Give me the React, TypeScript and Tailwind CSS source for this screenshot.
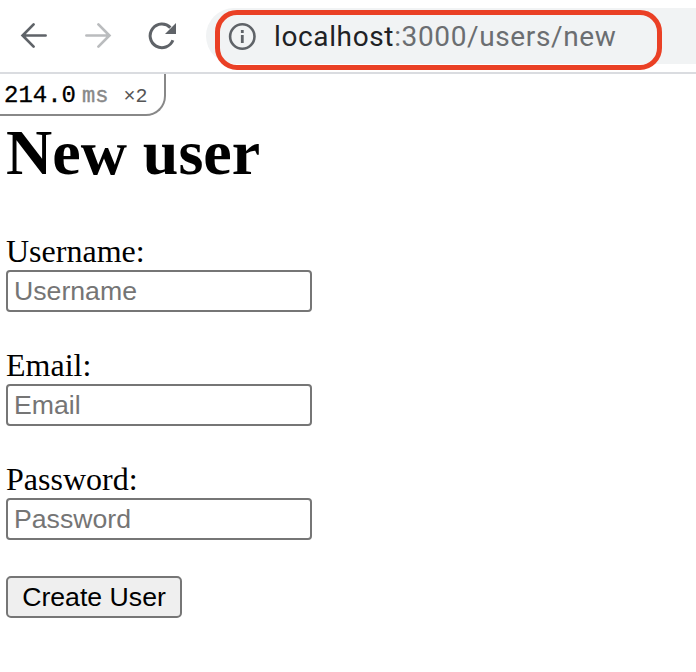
import React from "react";

function NavIcons() {
  return (
    <div className="flex h-full w-[206px] shrink-0">
      <svg width="206" height="72" viewBox="0 0 206 72" fill="none" strokeLinecap="round" strokeLinejoin="miter" strokeWidth="2.7">
        <path d="M33.6 24.4 22.6 35.5 33.6 46.6M23 35.5H45.6" stroke="#5f6368" />
        <path d="M98.4 24.4 109.4 35.5 98.4 46.6M86.4 35.5H109" stroke="#babcbe" />
        <path d="M172.9 40.3A11.8 11.8 0 1 1 170.4 27.6" stroke="#5f6368" strokeWidth="3" strokeLinecap="butt" />
        <path d="M176 23V34H165Z" fill="#5f6368" />
      </svg>
    </div>
  );
}

function BrowserBar() {
  return (
    <header className="flex h-[74px] border-b-2 border-[#dadce0] bg-white">
      <NavIcons />
      <div className="relative mt-2 flex h-14 flex-1 items-center rounded-l-full bg-[#f1f3f4] pl-[22px]">
        <svg width="29" height="29" viewBox="0 0 29 29" fill="none" className="shrink-0">
          <circle cx="14.3" cy="14.5" r="12.2" stroke="#5f6368" strokeWidth="2.6" />
          <path d="M14.3 13V21M14.3 8V11" stroke="#5f6368" strokeWidth="2.8" />
        </svg>
        <div className="ml-[17px] whitespace-nowrap pt-[2px] font-['Roboto',sans-serif] text-[28px] leading-[34px] tracking-[0.63px] text-[#6b6e71]">
          <span className="text-[#202124]">localhost</span>:3000/users/new
        </div>
        <div className="absolute left-[9px] top-[2px] h-[60px] w-[447px] rounded-[22px] border-[5px] border-[#ea4025]" />
      </div>
    </header>
  );
}

function Field({ label, type = "text" }: { label: string; type?: string }) {
  return (
    <div className="mb-9 flex flex-col">
      <label className="h-9 text-[32px] leading-[34px]">{label}:</label>
      <input
        type={type}
        placeholder={label}
        className="h-[42px] w-[306px] rounded-[4px] border-2 border-[#767676] bg-white px-[6px] font-['Liberation_Sans',Arial,sans-serif] text-[26.67px] leading-[30px] placeholder:text-[#757575]"
      />
    </div>
  );
}

export default function App() {
  return (
    <div className="h-[672px] w-[696px] overflow-hidden bg-white text-black">
      <BrowserBar />
      <div className="flex h-[42px] w-[166px] items-baseline whitespace-pre rounded-br-[20px] border-b-2 border-r-2 border-[#888] pl-1 pt-[7px] font-['Liberation_Mono',monospace]">
        <span className="text-[24px] leading-[30px] [-webkit-text-stroke:0.3px_#000]">214.0</span>
        <span className="ml-[6px] text-[22px] leading-[30px] text-[#888] [-webkit-text-stroke:0.4px_#888]">ms</span>
        <span className="ml-[15px] text-[20px] leading-[30px] text-[#555]">×2</span>
      </div>
      <main className="px-[6px] font-['Liberation_Serif','Times_New_Roman',serif]">
        <h1 className="mb-[44px] h-[74px] text-[64px] font-bold leading-[73px]">New user</h1>
        <form>
          <Field label="Username" />
          <Field label="Email" />
          <Field label="Password" type="password" />
          <button
            type="button"
            className="flex h-[42px] w-[176px] items-center justify-center whitespace-nowrap rounded-[5px] border-2 border-[#767676] bg-[#efefef] font-['Liberation_Sans',Arial,sans-serif] text-[26.67px]"
          >
            Create User
          </button>
        </form>
      </main>
    </div>
  );
}
